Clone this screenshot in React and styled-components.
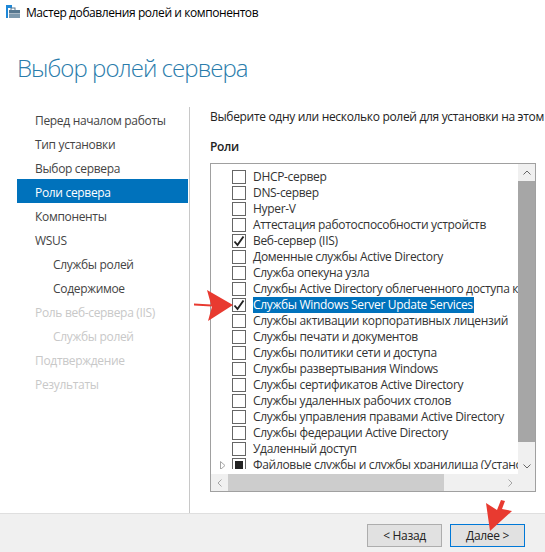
import React from "react";
import styled, { createGlobalStyle } from "styled-components";

const Global = createGlobalStyle`
  html, body { margin: 0; padding: 0; background: #fff; }
  * { box-sizing: border-box; }
`;
const Page = styled.div`
  position: relative; width: 545px; height: 552px; overflow: hidden; display: flex; flex-direction: column;
  font-family: "Open Sans", "Noto Sans", sans-serif; font-size: 12px; letter-spacing: -0.32px; color: #1f1f1f; background: #fff;
`;
const TitleBar = styled.div`
  height: 28px; flex: none; display: flex; align-items: center; gap: 6px; padding: 0 0 4px 6px; color: #000; font-size: 12px; letter-spacing: -0.42px;
`;
const Heading = styled.h1`
  margin: 0; flex: none; height: 79px; padding: 24px 0 0 17px; font-size: 24px; font-weight: 300; line-height: 32px; letter-spacing: -0.95px; color: #2a7cab;
`;
const Body = styled.div`flex: 1; min-height: 0; display: flex;`;
const Nav = styled.nav`
  width: 190px; flex: none; padding: 0 1px 0 17px; border-right: 1px solid #c8c8c8; display: flex; flex-direction: column; height: 100%;
`;
const NavItem = styled.div`
  height: 24px; flex: none; line-height: 24px; padding: 2px 0 0 ${p => (p.$sub ? 36 : 18)}px;
  white-space: nowrap;
  color: ${p => (p.$active ? "#fff" : p.$muted ? "#c8c8c8" : "#444")};
  background: ${p => (p.$active ? "#0072bc" : "transparent")};
`;
const Main = styled.div`flex: 1; min-width: 0; padding: 0 9px 21px 20px; display: flex; flex-direction: column;`;
const Lead = styled.div`height: 18px; padding-top: 1px; line-height: 18px; white-space: nowrap; color: #222;`;
const Label = styled.div`height: 38px; padding-top: 13px; line-height: 18px; font-weight: 600; color: #222;`;
const ListBox = styled.div`
  flex: 1; min-height: 0; border: 1px solid #a0a0a0; display: grid;
  grid-template-columns: 1fr 17px; grid-template-rows: 1fr 17px;
`;
const Viewport = styled.div`padding-top: 5px; min-width: 0; min-height: 0;`;
const Rows = styled.div`height: 300px; overflow: hidden;`;
const Row = styled.div`
  position: relative; height: 16px; display: flex; align-items: center; padding-left: 21px; gap: 7px; white-space: nowrap;
`;
const Expander = styled.svg`position: absolute; left: 8px; top: 4px;`;
const Box = styled.span`
  width: 14px; height: 14px; flex: none; border: 1px solid #666; background: #fff;
  display: flex; align-items: center; justify-content: center;
`;
const Mixed = styled.span`width: 8px; height: 8px; background: #222;`;
const RowText = styled.span`
  line-height: 16px; padding-right: 1px; color: ${p => (p.$selected ? "#fff" : "#333")};
  background: ${p => (p.$selected ? "#0072bc" : "transparent")};
`;
const VBar = styled.div`background: #f0f0f0; display: flex; flex-direction: column;`;
const Cap = styled.div`width: 17px; height: 17px; flex: none; display: flex; align-items: center; justify-content: center; background: #f0f0f0;`;
const VThumb = styled.div`height: 261px; flex: none; background: #a6a6a6;`;
const Spacer = styled.div`flex: 1;`;
const HBar = styled.div`background: #f0f0f0; display: flex; grid-column: 1 / 3;`;
const HThumb = styled.div`width: 216px; flex: none; background: #cdcdcd;`;
const Footer = styled.footer`
  height: 39px; flex: none; background: #f0f0f0; border-top: 1px solid #dfdfdf; display: flex; justify-content: flex-end; gap: 8px; padding: 10px 20px 0 0;
`;
const Button = styled.button`
  width: 75px; height: 23px; padding: 0; font: inherit; letter-spacing: inherit; color: #222; background: #e1e1e1;
  border: 1px solid ${p => (p.$primary ? "#0078d7" : "#adadad")};
`;
const Arrow = styled.svg`position: absolute; pointer-events: none; left: 0; top: 0;`;

const Tick = () => (
  <svg width="12" height="12" viewBox="0 0 12 12"><path d="M1.5 6.5 L4.5 10 L10.5 1.5" fill="none" stroke="#222" strokeWidth="1.9" /></svg>
);
const Chev = ({ d, c = "#666" }) => (
  <svg width="10" height="10" viewBox="0 0 10 10"><path d={d} fill="none" stroke={c} strokeWidth="1" /></svg>
);

const nav = [
  ["Перед началом работы"], ["Тип установки"], ["Выбор сервера"], ["Роли сервера", "active"], ["Компоненты"], ["WSUS"],
  ["Службы ролей", "sub"], ["Содержимое", "sub"], ["Роль веб-сервера (IIS)", "muted"], ["Службы ролей", "sub muted"],
  ["Подтверждение", "muted"], ["Результаты", "muted"],
];
const roles = [
  "DHCP-сервер", "DNS-сервер", "Hyper-V", "Аттестация работоспособности устройств", "Веб-сервер (IIS)",
  "Доменные службы Active Directory", "Служба опекуна узла", "Службы Active Directory облегченного доступа к",
  "Службы Windows Server Update Services", "Службы активации корпоративных лицензий", "Службы печати и документов",
  "Службы политики сети и доступа", "Службы развертывания Windows", "Службы сертификатов Active Directory",
  "Службы удаленных рабочих столов", "Службы управления правами Active Directory", "Службы федерации Active Directory",
  "Удаленный доступ", "Файловые службы и службы хранилища (Установлено)",
];

export default function App() {
  return (
    <Page>
      <Global />
      <TitleBar>
        <svg width="14" height="14" viewBox="0 0 14 14">
          <rect x="0" y="0" width="6" height="3" fill="#1e88d8" />
          <rect x="0" y="3" width="2" height="10" fill="#1e88d8" />
          <rect x="5" y="3" width="4" height="3" fill="none" stroke="#56778f" />
          <rect x="3" y="5" width="11" height="3.5" fill="#56778f" />
          <rect x="3" y="9" width="11" height="4" fill="#7d99ad" />
        </svg>
        Мастер добавления ролей и компонентов
      </TitleBar>
      <Heading>Выбор ролей сервера</Heading>
      <Body>
        <Nav>
          {nav.map(([t, k = ""], i) => (
            <NavItem key={i} $active={k === "active"} $sub={k.includes("sub")} $muted={k.includes("muted")}>{t}</NavItem>
          ))}
        </Nav>
        <Main>
          <Lead>Выберите одну или несколько ролей для установки на этом сервере.</Lead>
          <Label>Роли</Label>
          <ListBox>
            <Viewport>
              <Rows>
                {roles.map((r, i) => (
                  <Row key={r}>
                    {i === 18 && (
                      <Expander width="8" height="9" viewBox="0 0 8 9"><path d="M1.5 .5 L6 4.5 L1.5 8.5 Z" fill="#fff" stroke="#a6a6a6" /></Expander>
                    )}
                    <Box>{(i === 4 || i === 8) && <Tick />}{i === 18 && <Mixed />}</Box>
                    <RowText $selected={i === 8}>{r}</RowText>
                  </Row>
                ))}
              </Rows>
            </Viewport>
            <VBar>
              <Cap><Chev d="M1.5 6.5 L5 3 L8.5 6.5" /></Cap>
              <VThumb />
              <Spacer />
              <Cap><Chev d="M1.5 3.5 L5 7 L8.5 3.5" /></Cap>
            </VBar>
            <HBar>
              <Cap><Chev c="#a6a6a6" d="M6.5 1.5 L3 5 L6.5 8.5" /></Cap>
              <HThumb />
              <Spacer />
              <Cap><Chev c="#a6a6a6" d="M3.5 1.5 L7 5 L3.5 8.5" /></Cap>
              <Cap />
            </HBar>
          </ListBox>
        </Main>
      </Body>
      <Footer>
        <Button>&lt; Назад</Button>
        <Button $primary>Далее &gt;</Button>
      </Footer>
      <Arrow width="545" height="552" viewBox="0 0 545 552">
        <path d="M194 303.5 L211 304.5 L207 290 L233 305 L208 321 L212 306.5 L194 305.5 Z" fill="#e83a30" />
        <path d="M486 503 L497 510 L501 500 L505 501 L502 509 L512 511 L490 531 Z" fill="#e83a30" />
      </Arrow>
    </Page>
  );
}
